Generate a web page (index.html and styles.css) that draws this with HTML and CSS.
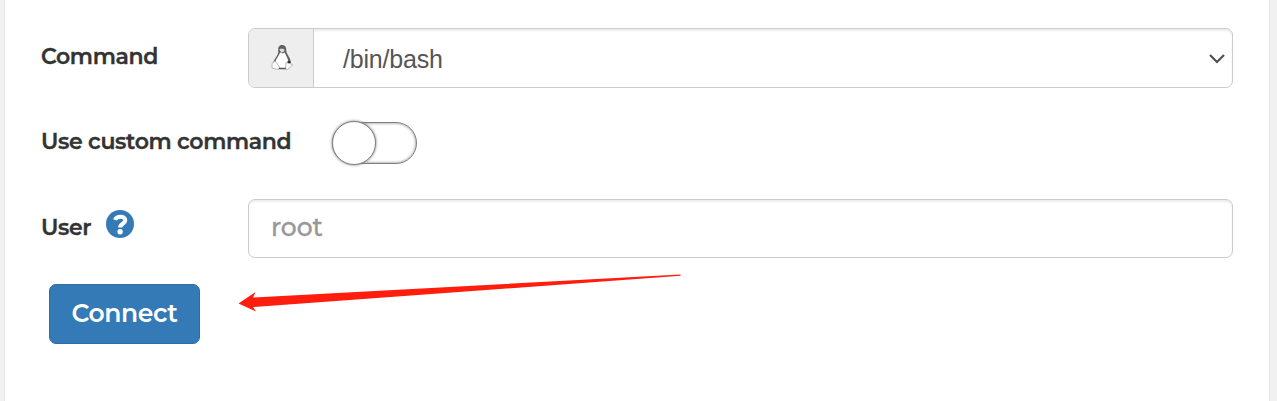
FILE: index.html
```
<!DOCTYPE html>
<html lang="en">
<head>
<meta charset="utf-8">
<title>Console</title>
<link rel="stylesheet" href="styles.css">
</head>
<body>
<main class="panel">
  <div class="row">
    <span class="label">Command</span>
    <div class="select">
      <span class="addon">
        <svg class="tux" width="22" height="27" viewBox="0 0 22 27">
          <path d="M7.300 8C6.800 3 8 1 11 1s4.500 2 4.300 6c.5 4 5 7 4.200 12l-3 6H6l-4-5c0-4 5-8 5.300-12z" fill="#606060"/>
          <path d="M9 8.500c-1 4-4.700 6.500-4.700 10.500l4.200 5h5.500l3.500-5c0-4-2.500-7-3.800-10.500l-2 1z" fill="#fff"/>
          <path d="M8.300 5.200l2-.7 3.500 1-1 2.200-2.500 1z" fill="#ddd"/>
          <path d="M16.500 18l3 .3" stroke="#222" stroke-width="2"/>
          <path d="M1 19.500l3-2.500 4.500 6-1 2.500-6.500-1.300zM15 18.500l3.500 1L21.500 20.500l-1 1.500-4 3.500h-2z" fill="#fafafa" stroke="#aaa" stroke-width=".8"/>
          <path d="M8 24.500h6.500" stroke="#555" stroke-width="1.500"/>
        </svg>
      </span>
      <span class="value">/bin/bash</span>
      <svg class="chevron" width="18" height="12" viewBox="0 0 18 12"><path d="M2 2l7 7 7-7" fill="none" stroke="#505050" stroke-width="2.200"/></svg>
    </div>
  </div>
  <div class="row row-custom">
    <span class="label label-wide">Use custom command</span>
    <span class="switch"><span class="knob"></span></span>
  </div>
  <div class="row row-user">
    <span class="label">User
      <svg class="help" width="28" height="28" viewBox="0 0 28 28"><circle cx="14" cy="14" r="14" fill="#337ab7"/><path d="M9 9.900C10.500 5.600 19.300 5.400 19.300 10.300c0 3.700-5.200 3.200-5.200 7.300" fill="none" stroke="#fff" stroke-width="4"/><circle cx="14.100" cy="21.800" r="2.700" fill="#fff"/></svg>
    </span>
    <input class="input" type="text" placeholder="root">
  </div>
  <div class="actions">
    <button class="connect">Connect</button>
    <svg class="arrow" width="444" height="40" viewBox="0 0 444 40"><path d="M.5 19.500L17.500 8l-2.500 5.500L442.500 -9.500v1.300L15 23l3 4.500z" fill="#ff1d0d"/></svg>
  </div>
</main>
</body>
</html>
```
FILE: styles.css
```
* { box-sizing: border-box; }
body {
  margin: 0;
  height: 401px;
  padding: 0 7px 0 4px;
  background: #f1f1f1;
  font-family: Montserrat, Inter, sans-serif;
  color: #333;
  overflow: hidden;
}
.panel {
  height: 401px;
  padding: 28px 36px 0;
  background: #fff;
  border: solid #e5e5e5;
  border-width: 0 1px;
}
.row { display: flex; height: 60px; }
.label {
  display: flex;
  width: 207px;
  height: 56px;
  align-items: center;
  flex: none;
  font-size: 22px;
  font-weight: 600;
  letter-spacing: -.35px;
  -webkit-text-stroke: .35px #333;
  white-space: nowrap;
}
.select {
  display: flex;
  flex: 1;
  align-items: center;
  border: 1px solid #ccc;
  border-radius: 7px;
  box-shadow: inset 0 2px 2px rgba(0, 0, 0, .075);
}
.addon {
  display: flex;
  width: 65px;
  height: 58px;
  align-items: center;
  justify-content: center;
  background: #eee;
  border-right: 1px solid #ccc;
  border-radius: 6px 0 0 6px;
}
.tux { margin: -2px 0 0 1px; }
.value {
  flex: 1;
  padding: 2px 0 0 29px;
  font: 25px "Liberation Sans", sans-serif;
  letter-spacing: -.2px;
  color: #555;
}
.chevron { margin: 1px 6px 0 0; }
.row-custom { margin-top: 25px; }
.label-wide { width: 291px; }
.switch {
  width: 85px;
  height: 42px;
  margin-top: 9px;
  border: 1px solid #808080;
  border-radius: 21px;
  box-shadow: inset 0 0 3px #777;
}
.knob {
  display: block;
  width: 44px;
  height: 44px;
  margin: -2px 0 0 -1px;
  background: #fff;
  border: 1px solid #808080;
  border-radius: 50%;
  box-shadow: 0 0 3px #777;
}
.row-user { height: 59px; margin-top: 26px; }
.help { margin: -6px 0 0 15px; }
.input {
  flex: 1;
  min-width: 0;
  padding: 0 22px 3px;
  border: 1px solid #ccc;
  border-radius: 7px;
  box-shadow: inset 0 2px 2px rgba(0, 0, 0, .075);
  font: 500 25px Montserrat, Inter, sans-serif;
  letter-spacing: -.1px;
}
.input::placeholder { color: #999; opacity: 1; -webkit-text-stroke: .3px #999; }
.actions { display: flex; margin: 26px 0 0 8px; }
.connect {
  width: 151px;
  height: 60px;
  padding: 0 0 2px;
  border: 1px solid #2e6da4;
  border-radius: 7px;
  background: #337ab7;
  color: #fff;
  font: 600 25px Montserrat, Inter, sans-serif;
  letter-spacing: -.4px;
}
.arrow { margin-left: 38px; overflow: visible; }
```
